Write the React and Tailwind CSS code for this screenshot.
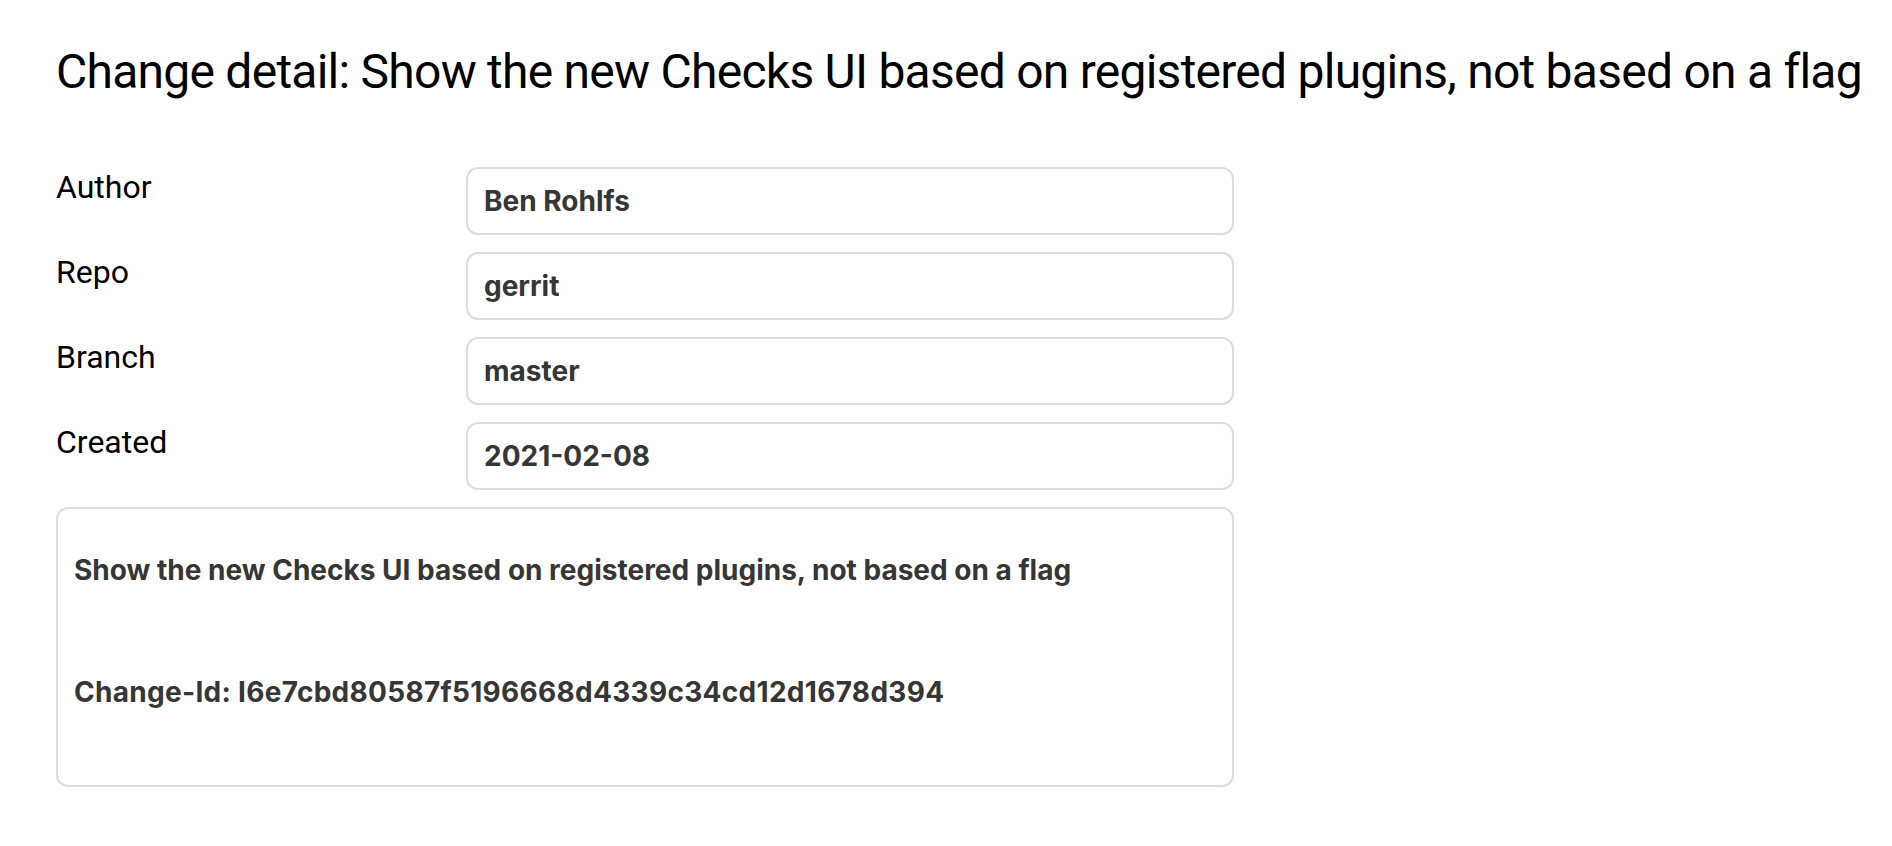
export default function App() {
  const rows = [
    ["Author", "Ben Rohlfs"],
    ["Repo", "gerrit"],
    ["Branch", "master"],
    ["Created", "2021-02-08"],
  ];
  return (
    <div
      className="min-h-screen bg-white px-[56px] pt-[40px]"
      style={{ fontFamily: "Inter, 'Noto Sans', sans-serif" }}
    >
      <h1
        className="text-[48px] leading-[64px] font-normal text-black whitespace-nowrap tracking-[-0.75px]"
        style={{ fontFamily: "Roboto, Inter, sans-serif" }}
      >
        Change detail: Show the new Checks UI based on registered plugins, not based on a flag
      </h1>
      <div className="mt-[63px] w-[1178px] flex flex-col gap-[17px]">
        {rows.map(([label, value]) => (
          <div key={label} className="flex">
            <div
              className="w-[410px] shrink-0 text-[32px] leading-[40px] text-black"
              style={{ fontFamily: "Roboto, Inter, sans-serif" }}
            >
              {label}
            </div>
            <div className="flex-1 h-[68px] rounded-[12px] border-2 border-[#dddddd] px-[16px] flex items-center text-[28px] font-bold text-[#363636]">
              {value}
            </div>
          </div>
        ))}
        <div className="rounded-[12px] border-2 border-[#dddddd] px-[16px] pt-[41px] pb-[73px] text-[28px] leading-[40px] font-bold text-[#363636]">
          <p>Show the new Checks UI based on registered plugins, not based on a flag</p>
          <p className="mt-[82px] tracking-[0.3px]">Change-Id: I6e7cbd80587f5196668d4339c34cd12d1678d394</p>
        </div>
      </div>
    </div>
  );
}
